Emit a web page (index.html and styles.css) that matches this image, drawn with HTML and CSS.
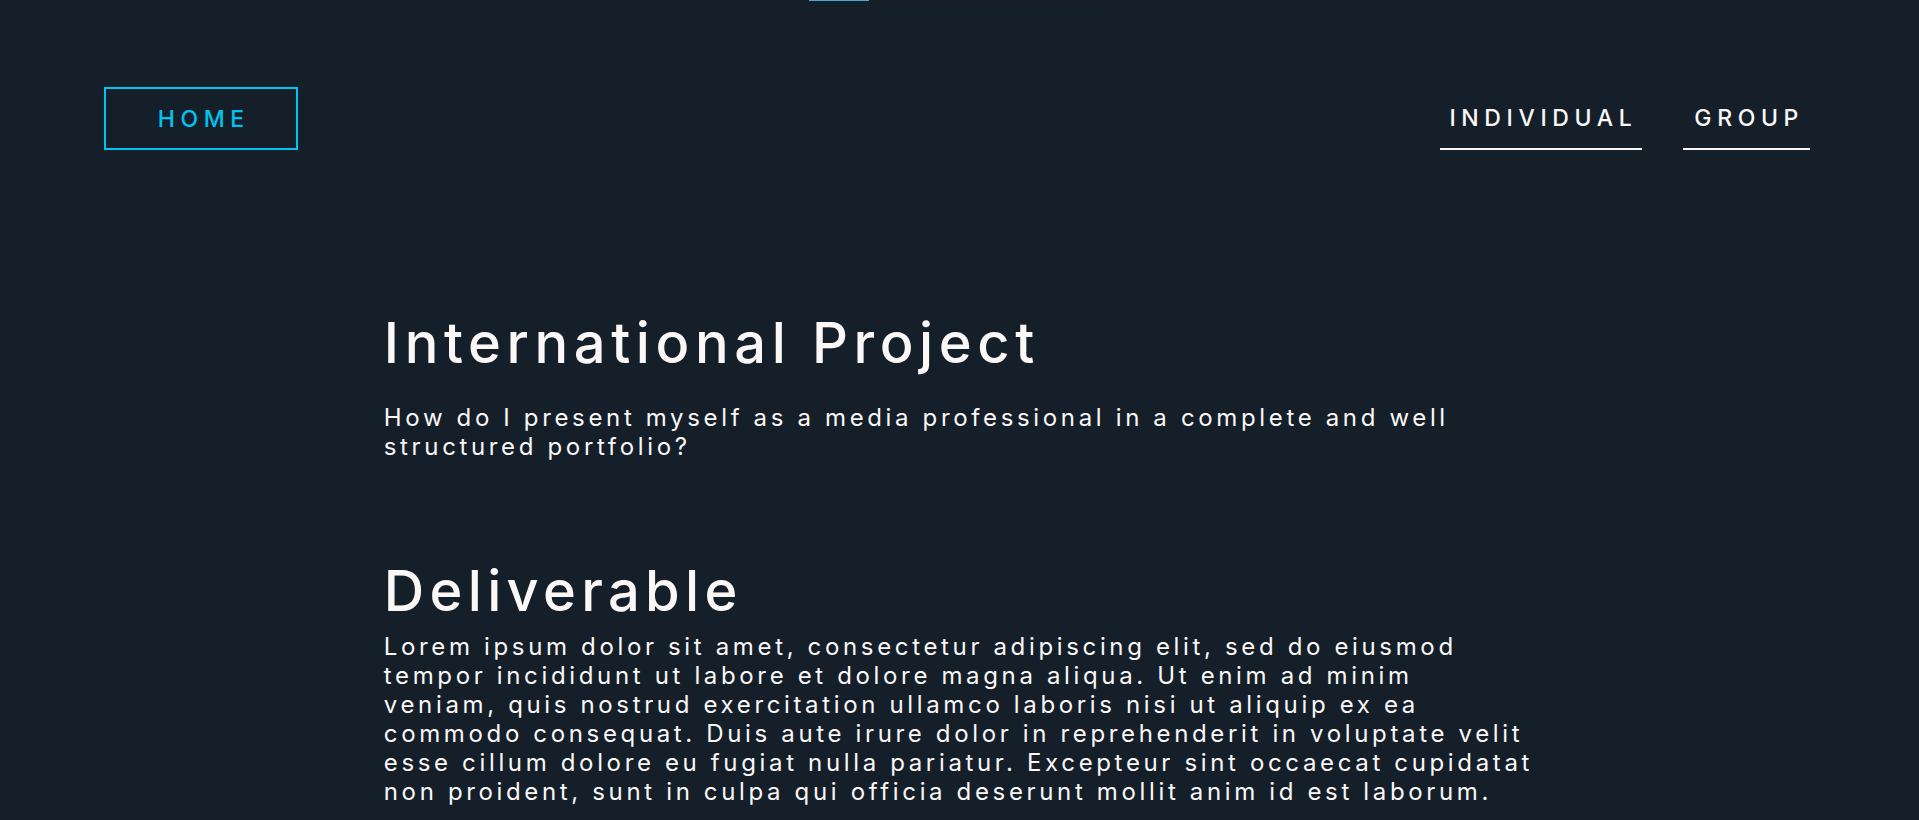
FILE: index.html
```html
<!DOCTYPE html>
<html lang="en">
<head>
<meta charset="utf-8">
<title>International Project</title>
<link rel="stylesheet" href="styles.css">
</head>
<body>
<div class="progress"><div class="progress-fill"></div></div>
<header class="header">
  <a class="home" href="#">HOME</a>
  <nav class="nav">
    <a class="nav-link" href="#">INDIVIDUAL</a>
    <a class="nav-link nav-link-group" href="#">GROUP</a>
  </nav>
</header>
<main class="content">
  <h1 class="title">International Project</h1>
  <p class="lead">How do I present myself as a media professional in a complete and well structured portfolio?</p>
  <h2 class="title title-section">Deliverable</h2>
  <p class="body-text">Lorem ipsum dolor sit amet, consectetur adipiscing elit, sed do eiusmod tempor incididunt ut labore et dolore magna aliqua. Ut enim ad minim veniam, quis nostrud exercitation ullamco laboris nisi ut aliquip ex ea commodo consequat. Duis aute irure dolor in reprehenderit in voluptate velit esse cillum dolore eu fugiat nulla pariatur. Excepteur sint occaecat cupidatat non proident, sunt in culpa qui officia deserunt mollit anim id est laborum.</p>
</main>
</body>
</html>
```
FILE: styles.css
```css
html, body {
  margin: 0;
  padding: 0;
}
body {
  background: #141f29;
  color: #fbf7f7;
  font-family: Inter, "Noto Sans", sans-serif;
}
.progress {
  width: 301px;
  height: 1px;
  margin: 0 auto;
  background: #201e1f;
}
.progress-fill {
  width: 60px;
  height: 100%;
  background: #4aa8d8;
}
.header {
  display: flex;
  justify-content: space-between;
  align-items: flex-end;
  padding: 86px 109px 0 104px;
}
.home {
  box-sizing: border-box;
  width: 194px;
  height: 63px;
  border: 2px solid #00c3f0;
  color: #00c3f0;
  display: flex;
  align-items: center;
  justify-content: center;
  font-size: 23px;
  font-weight: 500;
  letter-spacing: 0.245em;
  text-decoration: none;
  padding-left: 0.245em;
}
.nav {
  display: flex;
  gap: 41px;
}
.nav-link {
  box-sizing: border-box;
  height: 63px;
  display: flex;
  align-items: center;
  padding: 0 5px 0 9px;
  border-bottom: 2px solid #fbf7f7;
  color: #fbf7f7;
  font-size: 23px;
  font-weight: 500;
  letter-spacing: 0.245em;
  text-decoration: none;
}
.nav-link-group {
  padding: 0 6px 0 11px;
}
.content {
  width: 60%;
  margin: 159px auto 0;
}
.title {
  margin: 0;
  font-size: 56px;
  line-height: 68px;
  font-weight: 500;
  letter-spacing: 0.1em;
}
.lead {
  margin: 26px 0 0;
  font-size: 24px;
  line-height: 29px;
  font-weight: 400;
  letter-spacing: 0.152em;
}
.title-section {
  margin-top: 96px;
  letter-spacing: 0.095em;
}
.body-text {
  margin: 7px 0 0;
  font-size: 24px;
  line-height: 29px;
  font-weight: 400;
  letter-spacing: 0.152em;
}
```
